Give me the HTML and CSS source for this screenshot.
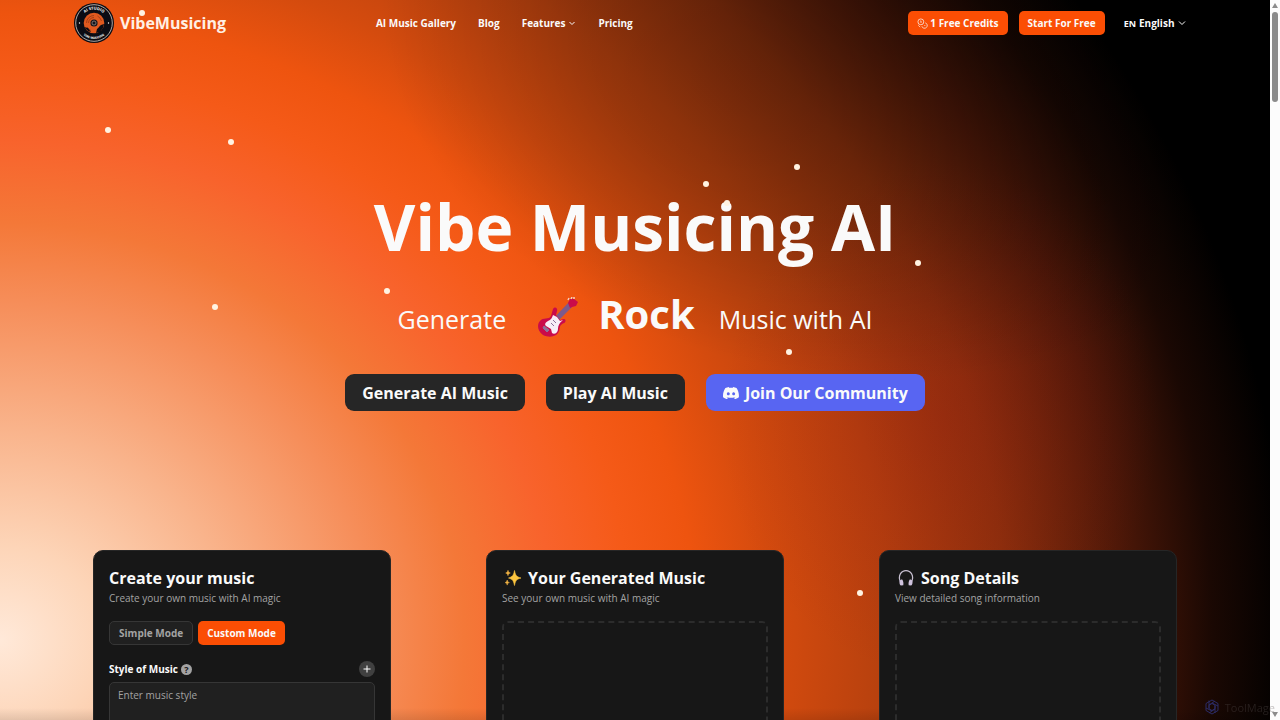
FILE: index.html
```html
<!DOCTYPE html>
<html lang="en">
<head>
    <meta charset="UTF-8">
    <meta name="viewport" content="width=device-width, initial-scale=1.0">
    <title>VibeMusicing</title>
    <link rel="stylesheet" href="styles.css">
</head>
<body>
    <svg class="stars" aria-hidden="true">
        <circle cx="142" cy="13" r="3"/>
        <circle cx="108" cy="130" r="3"/>
        <circle cx="231" cy="142" r="3"/>
        <circle cx="215" cy="307" r="3"/>
        <circle cx="387" cy="291" r="3"/>
        <circle cx="706" cy="184" r="3"/>
        <circle cx="797" cy="167" r="3"/>
        <circle cx="727" cy="203" r="3"/>
        <circle cx="918" cy="263" r="3"/>
        <circle cx="789" cy="352" r="3"/>
        <circle cx="860" cy="593" r="3"/>
    </svg>

    <header class="header">
        <a class="logo" href="#">
            <svg class="logo-mark" viewBox="0 0 40 40" aria-hidden="true">
                <defs>
                    <path id="arcTop" d="M6.5 20a13.500 13.500 0 0 1 27 0"/>
                    <path id="arcBottom" d="M4 20a16 16 0 0 0 32 0"/>
                </defs>
                <circle cx="20" cy="20" r="20" fill="#0b0c14"/>
                <circle cx="20" cy="20" r="18.300" fill="none" stroke="#d8cfc8" stroke-width=".8"/>
                <circle cx="20" cy="20" r="10.300" fill="#e0591f"/>
                <g fill="none" stroke="#8c3312" stroke-width=".7">
                    <path d="M12.500 20a7.500 7.500 0 0 1 7.500-7.500M14.500 20a5.500 5.500 0 0 1 5.500-5.500M27.500 18a8 8 0 0 0-4-5M13 24a8 8 0 0 0 4 3.500"/>
                </g>
                <path d="M23 26c2-1 2-3 4-4l3-1-1 4-3 4-4 1z" fill="#0b0c14"/>
                <path d="M10 24l4 1 3 4-3-1z" fill="#0b0c14"/>
                <circle cx="20" cy="20" r="3.600" fill="#15151c"/>
                <circle cx="20" cy="20" r="2" fill="none" stroke="#b9a79d" stroke-width=".6"/>
                <circle cx="5.500" cy="20" r=".7" fill="#fff"/>
                <circle cx="34.500" cy="20" r=".7" fill="#fff"/>
                <text class="logo-ring"><textPath href="#arcTop" startOffset="50%">AI STUDIO</textPath></text>
                <text class="logo-ring logo-ring-small"><textPath href="#arcBottom" startOffset="50%">VIBE MUSICING</textPath></text>
            </svg>
            <span>VibeMusicing</span>
        </a>
        <nav class="nav">
            <a href="#">AI Music Gallery</a>
            <a href="#">Blog</a>
            <button class="nav-menu" type="button">Features
                <svg class="chevron" viewBox="0 0 8 8" aria-hidden="true"><path d="M1.500 3l2.500 2.500L6.500 3"/></svg>
            </button>
            <a href="#">Pricing</a>
        </nav>
        <div class="actions">
            <button class="btn btn-orange" type="button">
                <svg class="coins" viewBox="0 0 12 12" aria-hidden="true">
                    <circle cx="4.200" cy="4.200" r="3.200"/>
                    <path d="M9 5.300a3 3 0 1 1-3.700 3.700M3.700 3.200h.7v2.300M8 7.700l1 1M1.500 8l2 2"/>
                </svg>
                1 Free Credits
            </button>
            <button class="btn btn-orange" type="button">Start For Free</button>
            <div class="language">
                <label for="language">EN</label>
                <select id="language">
                    <option>English</option>
                </select>
                <svg class="chevron" viewBox="0 0 8 8" aria-hidden="true"><path d="M1 2.500l3 3 3-3"/></svg>
            </div>
        </div>
    </header>

    <main>
        <section class="hero">
            <h1>Vibe Musicing AI</h1>
            <p class="tagline">
                <span>Generate</span>
                <svg class="guitar" viewBox="0 0 40 40" aria-hidden="true">
                    <path d="M15 22l16-17 4 4-17 17z" fill="#7d5a8c"/>
                    <path d="M30 6l2-4 4 0 4 3-2 4-4 1-2 1z" fill="#ca0b4a"/>
                    <path d="M30 3l1-2M33 2l1-2M36 2V0" stroke="#f6cfc0" stroke-width="1.500"/>
                    <path d="M15 12c2-3 5-1 4 2l-1 4 4 5 4-1c2 0 2 3 0 4-5 2-4 5-5 8-2 6-10 7-16 4-6-4-6-11-3-14 3-4 9-1 11-5z" fill="#ca0b4a"/>
                    <path d="M15 18l4 2 3 4 3-1c-4 3-5 6-5 9 0 4-4 6-6 4l-1-4-5-3c-2-2 0-4 2-5 3-1 4-3 5-6z" fill="#f7edf8"/>
                    <path d="M6 29l5 4-2 2-4-4zM13 26l3 3M15 23l3 3" fill="#8d719b" stroke="#8d719b"/>
                </svg>
                <strong>Rock</strong>
                <span>Music with AI</span>
            </p>
            <div class="hero-buttons">
                <button class="btn-large" type="button">Generate AI Music</button>
                <button class="btn-large" type="button">Play AI Music</button>
                <a class="btn-large btn-discord" href="#">
                    <svg class="discord" viewBox="0 0 24 18" aria-hidden="true">
                        <path fill-rule="evenodd" d="M20.300 1.500A20 20 0 0 0 15.400 0l-.7 1.300a18.500 18.500 0 0 0-5.500 0L8.600 0a20 20 0 0 0-5 1.500C.5 6.200-.3 10.800.1 15.300a20 20 0 0 0 6 3l1.300-2-2-1 .5-.4c4 1.800 8.200 1.800 12.100 0l.5.4-2 1 1.300 2a20 20 0 0 0 6-3c.5-5.200-.8-9.700-3.500-13.800zM8 12.500c-1.200 0-2.200-1-2.200-2.400S6.800 7.700 8 7.700s2.200 1.100 2.200 2.400S9.200 12.500 8 12.500zm8 0c-1.200 0-2.200-1-2.200-2.400s1-2.400 2.200-2.400 2.200 1.100 2.200 2.400-1 2.400-2.200 2.400z"/>
                    </svg>
                    Join Our Community
                </a>
            </div>
        </section>

        <section class="cards">
            <form class="card">
                <h2>Create your music</h2>
                <p class="card-text">Create your own music with AI magic</p>
                <div class="modes">
                    <button class="btn btn-dark" type="button">Simple Mode</button>
                    <button class="btn btn-orange" type="button">Custom Mode</button>
                </div>
                <div class="field-head">
                    <label for="musicStyle">Style of Music</label>
                    <span class="help">?</span>
                    <button class="add" type="button" aria-label="Add style">
                        <svg viewBox="0 0 16 16" aria-hidden="true"><path d="M8 4.500v7M4.500 8h7"/></svg>
                    </button>
                </div>
                <textarea id="musicStyle" placeholder="Enter music style"></textarea>
            </form>

            <article class="card">
                <h2>
                    <svg class="card-icon" viewBox="0 0 18 18" aria-hidden="true">
                        <path d="M10.500 1.500c1 5 2 6.200 6.500 7.500-4.500 1.300-5.500 2.500-6.500 7.500C9.500 11.500 8.500 10.300 4.500 9c4-1.300 5-2.500 6-7.500z" fill="#fcc53f" stroke="#fcc53f" stroke-width=".6"/>
                        <path d="M4 1.300c.4 1.800.8 2.200 2.300 2.700C4.800 4.500 4.400 5 4 6.700 3.600 5 3.200 4.500 1.700 4 3.200 3.500 3.600 3.100 4 1.300zM3.200 11c.4 1.700.8 2.100 2.200 2.600-1.400.4-1.800.9-2.200 2.500-.4-1.600-.8-2.100-2.200-2.500 1.400-.5 1.800-.9 2.200-2.600z" fill="#f3b545" stroke="#f3b545" stroke-width=".5"/>
                    </svg>
                    Your Generated Music
                </h2>
                <p class="card-text">See your own music with AI magic</p>
                <div class="placeholder"></div>
            </article>

            <article class="card">
                <h2>
                    <svg class="card-icon" viewBox="0 0 18 18" aria-hidden="true">
                        <path d="M3.500 13C.5 6.500 4.300 1.700 9 1.700S17.500 6.500 14.500 13" fill="none" stroke="#c9c1d2" stroke-width="1.200"/>
                        <path d="M2.700 11.500l2.300-1.200c1.300 1.500 1.700 3.800 1.300 6l-2.500.3c-1.300-1-1.600-3-1.100-5.100zM15.300 11.500l-2.300-1.200c-1.300 1.500-1.700 3.800-1.300 6l2.500.3c1.300-1 1.600-3 1.100-5.100z" fill="#cfc2dd"/>
                    </svg>
                    Song Details
                </h2>
                <p class="card-text">View detailed song information</p>
                <div class="placeholder"></div>
            </article>
        </section>
    </main>

    <div class="scrollbar" aria-hidden="true">
        <span class="arrow arrow-up"></span>
        <span class="thumb"></span>
        <span class="arrow arrow-down"></span>
    </div>

    <div class="badge">
        <svg viewBox="0 0 16 16" aria-hidden="true">
            <path d="M8 1l6 3.500v7L8 15l-6-3.500v-7zM8 4.500l3 1.700v3.500l-3 1.800-3-1.800V6.200zM5 1.500v8M11 2l-6 4M14 7L8 4M11 14V6.500M5 14l6-4M2 9l6 3"/>
        </svg>
        <span>ToolMage</span>
    </div>
</body>
</html>
```

FILE: styles.css
```css
* {
    margin: 0;
    padding: 0;
    box-sizing: border-box;
}

body {
    position: relative;
    height: 100vh;
    padding-right: 10px;
    overflow: hidden;
    font-family: "Open Sans", "Noto Sans", sans-serif;
    font-size: 10px;
    color: #fafafa;
    background:
        linear-gradient(to top, rgba(0, 0, 0, 0.1), transparent 12px),
        radial-gradient(ellipse 520px 380px at 900px 0, rgba(0, 0, 0, 0.4), rgba(0, 0, 0, 0.2) 60%, transparent),
        radial-gradient(ellipse 220px 260px at 940px 420px, rgba(150, 20, 20, 0.25), transparent),
        radial-gradient(ellipse 1290px 1160px at 0 640px, #ffe9d9 0, #fdd5b8 8%, #f9b48c 18%, #f68e5a 29%, #f47838 36%, #f8632c 43%, #f55a18 49%, #ee540f 54%, #d44b0e 60%, #b5400e 69%, #8c300c 78%, #4e1808 87%, #1a0803 94%, #000 100%);
}

a {
    color: inherit;
    text-decoration: none;
}

button,
select,
textarea {
    font: inherit;
    color: inherit;
    border: none;
    background: none;
}

button {
    cursor: pointer;
}

.stars {
    position: absolute;
    top: 0;
    left: 0;
    width: 100%;
    height: 100%;
    fill: #fff3e2;
    pointer-events: none;
}

.header {
    display: flex;
    align-items: center;
    height: 46px;
    padding: 0 84px 0 74px;
    font-weight: 700;
}

.logo {
    display: flex;
    align-items: center;
    gap: 6px;
    font-size: 16px;
    color: #fff0e4;
}

.logo-mark {
    width: 40px;
    height: 40px;
}

.logo-ring {
    font-size: 4px;
    fill: #fff;
    text-anchor: middle;
}

.logo-ring-small {
    font-size: 3px;
}

.nav {
    display: flex;
    align-items: center;
    gap: 22px;
    margin-left: 150px;
}

.nav-menu {
    display: flex;
    align-items: center;
    gap: 3px;
}

.chevron {
    width: 8px;
    height: 8px;
    fill: none;
    stroke: currentColor;
    stroke-width: 1;
}

.actions {
    display: flex;
    align-items: center;
    gap: 11px;
    margin-left: auto;
}

.btn {
    display: flex;
    align-items: center;
    gap: 2px;
    height: 24px;
    padding: 0 9px;
    border-radius: 5px;
    font-weight: 700;
}

.btn-orange {
    background: #fb4e04;
}

.btn-dark {
    border: 1px solid #363636;
    background: #202020;
    color: #a3a3a3;
}

.coins {
    width: 11px;
    height: 11px;
    fill: none;
    stroke: currentColor;
    stroke-width: 0.8;
}

.language {
    display: flex;
    align-items: center;
    gap: 3px;
    margin-left: 8px;
}

.language label {
    font-size: 9px;
}

.language select {
    appearance: none;
}

.hero {
    display: flex;
    flex-direction: column;
    align-items: center;
    padding-top: 141px;
}

.hero h1 {
    font-size: 64px;
    line-height: 80px;
}

.tagline {
    display: flex;
    align-items: baseline;
    margin-top: 17px;
    font-size: 25px;
    line-height: 60px;
}

.tagline strong {
    margin: 0 24px 0 20px;
    font-size: 40px;
}

.guitar {
    align-self: center;
    width: 40px;
    height: 40px;
    margin-left: 32px;
}

.hero-buttons {
    display: flex;
    gap: 21px;
    margin-top: 25px;
}

.btn-large {
    display: flex;
    align-items: center;
    gap: 6px;
    height: 37px;
    padding: 0 17px;
    border-radius: 9px;
    background: #262626;
    font-size: 16px;
    font-weight: 700;
}

.btn-discord {
    background: #5865f2;
}

.discord {
    width: 16px;
    height: 12px;
    fill: currentColor;
}

.cards {
    display: grid;
    grid-template-columns: repeat(3, 1fr);
    gap: 95px;
    max-width: 1084px;
    margin: 139px auto 0;
}

.card {
    height: 480px;
    padding: 16px 15px;
    border: 1px solid #262626;
    border-radius: 10px;
    background: #171717;
}

.card h2 {
    display: flex;
    align-items: center;
    gap: 6px;
    font-size: 16px;
    line-height: 22px;
}

.card-icon {
    width: 18px;
    height: 18px;
    margin-left: 2px;
}

.card-text {
    margin-top: 1px;
    line-height: 16px;
    color: #a3a3a3;
}

.modes {
    display: flex;
    gap: 5px;
    margin-top: 15px;
}

.field-head {
    display: flex;
    align-items: center;
    gap: 3px;
    margin-top: 16px;
    font-weight: 700;
}

.help {
    width: 11px;
    height: 11px;
    border-radius: 50%;
    background: #a3a3a3;
    font-size: 9px;
    line-height: 11px;
    text-align: center;
    color: #171717;
}

.add {
    width: 16px;
    height: 16px;
    margin-left: auto;
    border-radius: 50%;
    background: #404040;
}

.add svg {
    display: block;
    fill: none;
    stroke: #fff;
}

.card textarea {
    display: block;
    width: 100%;
    height: 96px;
    margin-top: 5px;
    padding: 4px 8px;
    border: 1px solid #363636;
    border-radius: 5px;
    background: #202020;
    line-height: 16px;
    resize: none;
}

.card textarea::placeholder {
    color: #a3a3a3;
}

.placeholder {
    height: 300px;
    margin-top: 15px;
    border: 2px dashed #2c2c2c;
    border-radius: 6px;
}

.scrollbar {
    position: fixed;
    top: 0;
    right: 0;
    bottom: 0;
    display: flex;
    flex-direction: column;
    align-items: center;
    width: 10px;
    padding: 3px 0;
    background: #fcfcfc;
}

.thumb {
    width: 6px;
    height: 90px;
    margin-top: 4px;
    border-radius: 3px;
    background: #8b8b8b;
}

.arrow {
    border: 3px solid transparent;
}

.arrow-up {
    border-top: none;
    border-bottom: 5px solid #8b8b8b;
}

.arrow-down {
    margin-top: auto;
    border-top: 5px solid #8b8b8b;
    border-bottom: none;
}

.badge {
    position: fixed;
    right: 5px;
    bottom: 5px;
    display: flex;
    align-items: center;
    gap: 5px;
    font-size: 11px;
    color: rgba(90, 80, 80, 0.35);
}

.badge svg {
    width: 16px;
    height: 16px;
    fill: none;
    stroke: #2c2c66;
}
```
